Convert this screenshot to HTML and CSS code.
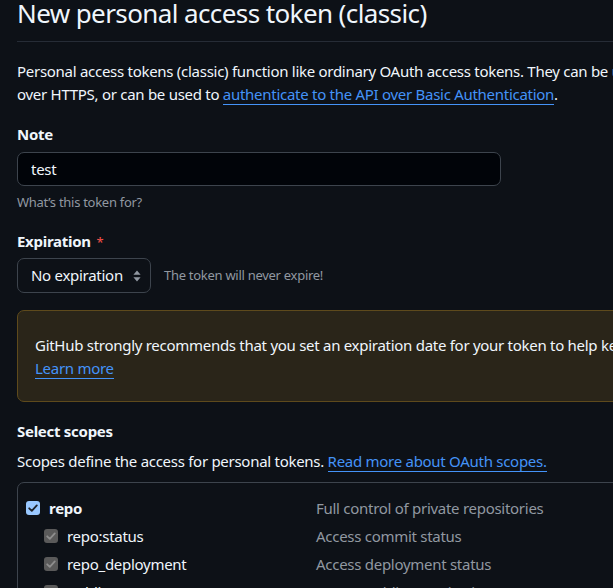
FILE: index.html
```html
<!DOCTYPE html>
<html lang="en">
<head>
<meta charset="utf-8">
<title>New personal access token (classic)</title>
<link rel="stylesheet" href="styles.css">
</head>
<body>
<main class="page">
  <div class="subhead">
    <h1 class="subhead-title">New personal access token (classic)</h1>
  </div>

  <p class="intro">Personal access tokens (classic) function like ordinary OAuth access tokens. They can be used instead of a password for Git<br>over HTTPS, or can be used to <a href="#" class="link">authenticate to the API over Basic Authentication</a>.</p>

  <div class="field">
    <label class="label" for="note">Note</label>
    <input id="note" class="input" type="text" value="test">
    <p class="note-hint">What’s this token for?</p>
  </div>

  <div class="field field-exp">
    <label class="label">Expiration <span class="required">*</span></label>
    <div class="expiry-row">
      <div class="select">
        <span>No expiration</span>
        <svg class="select-arrows" width="8" height="12" viewBox="0 0 8 12" aria-hidden="true">
          <path d="M4 0.5 L7.6 4.8 H0.4 Z M4 11.5 L7.6 7.2 H0.4 Z" fill="#9198a1"/>
        </svg>
      </div>
      <span class="hint">The token will never expire!</span>
    </div>
  </div>

  <div class="flash">
    GitHub strongly recommends that you set an expiration date for your token to help keep your information secure.<br>
    <a href="#" class="link">Learn more</a>
  </div>

  <h3 class="scopes-title">Select scopes</h3>
  <p class="scopes-desc">Scopes define the access for personal tokens. <a href="#" class="link">Read more about OAuth scopes.</a></p>

  <div class="scopes">
    <div class="scope">
      <div class="scope-name">
        <span class="cb cb-on"><svg viewBox="0 0 14 14" width="14" height="14"><path d="M3.2 7.3 L5.8 9.9 L10.8 4.4" fill="none" stroke="#1e2228" stroke-width="1.8" stroke-linecap="round" stroke-linejoin="round"/></svg></span>
        <b>repo</b>
      </div>
      <div class="scope-desc">Full control of private repositories</div>
    </div>
    <div class="scope sub">
      <div class="scope-name">
        <span class="cb cb-dis"><svg viewBox="0 0 14 14" width="14" height="14"><path d="M3.2 7.3 L5.8 9.9 L10.8 4.4" fill="none" stroke="#8e8e8e" stroke-width="1.8" stroke-linecap="round" stroke-linejoin="round"/></svg></span>
        <span>repo:status</span>
      </div>
      <div class="scope-desc">Access commit status</div>
    </div>
    <div class="scope sub">
      <div class="scope-name">
        <span class="cb cb-dis"><svg viewBox="0 0 14 14" width="14" height="14"><path d="M3.2 7.3 L5.8 9.9 L10.8 4.4" fill="none" stroke="#8e8e8e" stroke-width="1.8" stroke-linecap="round" stroke-linejoin="round"/></svg></span>
        <span>repo_deployment</span>
      </div>
      <div class="scope-desc">Access deployment status</div>
    </div>
    <div class="scope sub">
      <div class="scope-name">
        <span class="cb cb-dis"><svg viewBox="0 0 14 14" width="14" height="14"><path d="M3.2 7.3 L5.8 9.9 L10.8 4.4" fill="none" stroke="#8e8e8e" stroke-width="1.8" stroke-linecap="round" stroke-linejoin="round"/></svg></span>
        <span>public_repo</span>
      </div>
      <div class="scope-desc">Access public repositories</div>
    </div>
  </div>
</main>
</body>
</html>
```
FILE: styles.css
```css
html, body {
  margin: 0;
  padding: 0;
  background: #0d1117;
  overflow: hidden;
}

body {
  color: #f0f6fc;
  font-family: "Noto Sans", "Open Sans", sans-serif;
  font-size: 15px;
  line-height: 23px;
  letter-spacing: -0.28px;
}

.page {
  width: 1000px;
  padding-left: 17px;
}

.subhead {
  border-bottom: 1px solid #262c36;
  padding-bottom: 15px;
}

.subhead-title {
  margin: 0;
  font-size: 26px;
  font-weight: 400;
  line-height: 26px;
  letter-spacing: -0.6px;
}

.intro {
  margin: 18px 0 0;
  white-space: nowrap;
}

.link {
  color: #4493f8;
  text-decoration: none;
  border-bottom: 1px solid #4493f8;
}

.field {
  margin-top: 17px;
}

.field-exp {
  margin-top: 18px;
}

.label {
  display: block;
  font-weight: 700;
}

.required {
  color: #f85149;
  font-size: 13px;
  font-weight: 400;
  margin-left: 2px;
}

.input {
  display: block;
  box-sizing: border-box;
  margin-top: 6px;
  width: 484px;
  height: 34px;
  padding: 0 13px;
  background: #010409;
  color: #f0f6fc;
  border: 1px solid #3d444d;
  border-radius: 7px;
  font: inherit;
  letter-spacing: inherit;
  outline: none;
}

.note-hint {
  margin: 6px 0 0;
  font-size: 13px;
  line-height: 20px;
  color: #9198a1;
}

.expiry-row {
  display: flex;
  align-items: center;
  gap: 13px;
  margin-top: 4px;
}

.select {
  box-sizing: border-box;
  width: 134px;
  height: 35px;
  display: flex;
  align-items: center;
  justify-content: space-between;
  padding: 0 9px 0 13px;
  border: 1px solid #3d444d;
  border-radius: 7px;
  background: #0d1117;
}

.hint {
  font-size: 13px;
  color: #9198a1;
}

.flash {
  margin-top: 17px;
  box-sizing: border-box;
  height: 92px;
  padding: 23px 17px 0;
  background: #2a2519;
  border: 1px solid #5e4a1c;
  border-radius: 7px;
  white-space: nowrap;
}

.scopes-title {
  margin: 18px 0 0;
  font-size: 15px;
  font-weight: 700;
}

.scopes-desc {
  margin: 7px 0 0;
}

.scopes {
  margin-top: 9px;
  border: 1px solid #3d444d;
  border-radius: 7px;
  padding: 11px 0 0 8px;
}

.scope {
  display: grid;
  grid-template-columns: 290px 1fr;
  height: 28px;
  align-items: center;
}

.scope-name {
  display: flex;
  align-items: center;
  gap: 9px;
}

.scope.sub .scope-name {
  padding-left: 18px;
}

.scope-desc {
  color: #9198a1;
}

.cb {
  width: 14px;
  height: 14px;
  border-radius: 3px;
  display: inline-flex;
}

.cb-on {
  background: #99c8ff;
}

.cb-dis {
  background: #5a5a5a;
}
```
